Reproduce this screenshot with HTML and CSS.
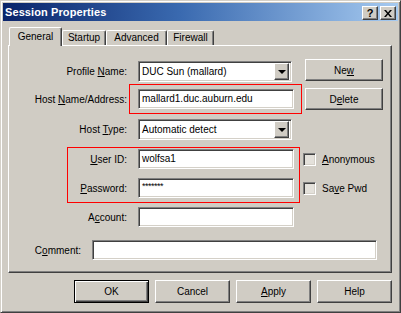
FILE: index.html
```html
<!DOCTYPE html>
<html lang="en">
<head>
    <meta charset="UTF-8">
    <title>Session Properties</title>
    <link rel="stylesheet" href="styles.css">
</head>
<body>
    <div class="window">
        <div class="titlebar">
            <span class="title">Session Properties</span>
            <span class="caption-btn help-btn">?</span>
            <span class="caption-btn close-btn">
                <svg width="8" height="7" viewBox="0 0 8 7"><path d="M0 0h2l2 2.5 2-2.5h2l-3 3.5 3 3.5h-2l-2-2.5-2 2.5h-2l3-3.5z" fill="#000"/></svg>
            </span>
        </div>

        <div class="content">
            <div class="tabs">
                <div class="tab active" style="width:53px">General</div>
                <div class="tab" style="width:44px">Startup</div>
                <div class="tab" style="width:61px">Advanced</div>
                <div class="tab" style="width:47px">Firewall</div>
            </div>

            <div class="panel">
                <div class="row r1">
                    <label class="lbl">Profile <u>N</u>ame:</label>
                    <div class="select"><span>DUC Sun (mallard)</span><span class="arrow"></span></div>
                    <button class="btn side-btn">Ne<u>w</u></button>
                </div>
                <div class="row r2">
                    <label class="lbl">Host <u>N</u>ame/Address:</label>
                    <div class="field">mallard1.duc.auburn.edu</div>
                    <button class="btn side-btn side-btn2">D<u>e</u>lete</button>
                </div>
                <div class="row r3">
                    <label class="lbl">Host <u>T</u>ype:</label>
                    <div class="select"><span>Automatic detect</span><span class="arrow"></span></div>
                </div>
                <div class="row r4">
                    <label class="lbl"><u>U</u>ser ID:</label>
                    <div class="field">wolfsa1</div>
                    <div class="check"><span class="box"></span><u>A</u>nonymous</div>
                </div>
                <div class="row r5">
                    <label class="lbl"><u>P</u>assword:</label>
                    <div class="field pwd">*******</div>
                    <div class="check"><span class="box"></span>Sa<u>v</u>e Pwd</div>
                </div>
                <div class="row r6">
                    <label class="lbl">A<u>c</u>count:</label>
                    <div class="field"></div>
                </div>
                <div class="row r7">
                    <label class="lbl lbl-short">C<u>o</u>mment:</label>
                    <div class="field wide"></div>
                </div>

                <div class="mark mark-host"></div>
                <div class="mark mark-login"></div>
            </div>

            <div class="actions">
                <button class="btn act default">OK</button>
                <button class="btn act">Cancel</button>
                <button class="btn act"><u>A</u>pply</button>
                <button class="btn act">Help</button>
            </div>
        </div>
    </div>
</body>
</html>
```

FILE: styles.css
```css
* {
    margin: 0;
    padding: 0;
    box-sizing: border-box;
}

body {
    font-family: "Liberation Sans", Arial, sans-serif;
    font-size: 10px;
    color: #000;
    background: #d0ccc4;
}

.window {
    width: 401px;
    height: 313px;
    background: #d0ccc4;
    border: 1px solid;
    border-color: #d4d0c8 #404040 #404040 #d4d0c8;
    box-shadow: inset 1px 1px #fff, inset -1px -1px #808080;
    padding: 2px;
}

.titlebar {
    height: 18px;
    display: flex;
    align-items: center;
    padding: 0 2px 0 2px;
    background: linear-gradient(to right, #0a246a, #3a6ab0 45%, #a6caf0);
}

.title {
    flex: 1;
    color: #fff;
    font-weight: bold;
    font-size: 11px;
    letter-spacing: 0.1px;
}

.caption-btn {
    width: 16px;
    height: 14px;
    display: flex;
    align-items: center;
    justify-content: center;
    background: #d0ccc4;
    border: 1px solid;
    border-color: #fff #404040 #404040 #fff;
    box-shadow: inset -1px -1px #808080;
    font-weight: bold;
    font-size: 11px;
    margin-top: 2px;
}

.close-btn {
    margin-left: 2px;
}

.content {
    padding: 6px 6px 7px 5px;
}

.tabs {
    height: 18px;
    display: flex;
    align-items: flex-end;
    padding-left: 1px;
}

.tab {
    height: 15px;
    text-align: center;
    padding-top: 1px;
    border: 1px solid;
    border-bottom: none;
    border-color: #fff #404040 #404040 #fff;
    box-shadow: inset -1px 0 #808080;
    border-radius: 2px 2px 0 0;
    background: #d0ccc4;
}

.tab.active {
    height: 19px;
    margin-bottom: -1px;
    padding-top: 3px;
    position: relative;
    z-index: 1;
}

.panel {
    position: relative;
    height: 228px;
    border: 1px solid;
    border-color: #fff #404040 #404040 #fff;
    box-shadow: inset -1px -1px #808080;
    padding: 14px 0 0 1px;
}

.row {
    height: 22px;
    display: flex;
    align-items: center;
}

.r2 { margin-top: 6px; }
.r3, .r4 { margin-top: 8px; }
.r5, .r6 { margin-top: 7px; }
.r7 { margin-top: 11px; }

.lbl {
    width: 117px;
    text-align: right;
    margin-right: 11px;
}

.lbl-short {
    width: 71px;
}

.field,
.select {
    width: 156px;
    height: 20px;
    background: #fff;
    border: 1px solid;
    border-color: #808080 #fff #fff #808080;
    box-shadow: inset 1px 1px #404040, inset -1px -1px #d4d0c8;
    padding: 3px 0 0 3px;
    white-space: nowrap;
    overflow: hidden;
}

.select {
    width: 154px;
    height: 21px;
    display: flex;
    justify-content: space-between;
    padding: 2px 2px 2px 3px;
    align-items: center;
}

.arrow {
    width: 15px;
    height: 17px;
    background: #d0ccc4;
    border: 1px solid;
    border-color: #fff #404040 #404040 #fff;
    box-shadow: inset -1px -1px #808080;
    position: relative;
}

.arrow::after {
    content: "";
    position: absolute;
    left: 3px;
    top: 6px;
    border-left: 4px solid transparent;
    border-right: 4px solid transparent;
    border-top: 4px solid #000;
}

.pwd {
    font-size: 9px;
    padding-top: 2px;
    letter-spacing: -0.5px;
}

.wide {
    width: 285px;
}

.btn {
    font-family: inherit;
    font-size: 10px;
    color: #000;
    background: #d0ccc4;
    border: 1px solid;
    border-color: #fff #404040 #404040 #fff;
    box-shadow: inset -1px -1px #808080;
}

.side-btn {
    width: 78px;
    height: 22px;
    margin-left: 13px;
    margin-top: -2px;
}

.side-btn2 {
    margin-left: 11px;
    margin-top: 0;
}

.check {
    display: flex;
    align-items: center;
    margin-left: 9px;
}

.box {
    width: 13px;
    height: 13px;
    margin-right: 6px;
    border: 1px solid;
    border-color: #808080 #fff #fff #808080;
    box-shadow: inset 1px 1px #404040, inset -1px -1px #d4d0c8;
    background: #e4e1db;
}

.mark {
    position: absolute;
    border: 1px solid #f00;
}

.mark-host {
    left: 120px;
    top: 38px;
    width: 173px;
    height: 30px;
}

.mark-login {
    left: 58px;
    top: 101px;
    width: 233px;
    height: 56px;
}

.actions {
    display: flex;
    justify-content: flex-end;
    gap: 6px;
    margin-top: 7px;
}

.act {
    width: 75px;
    height: 23px;
}

.act.default {
    border: 1px solid #000;
    box-shadow: inset 1px 1px #fff, inset -1px -1px #404040, inset -2px -2px #808080;
}
```
